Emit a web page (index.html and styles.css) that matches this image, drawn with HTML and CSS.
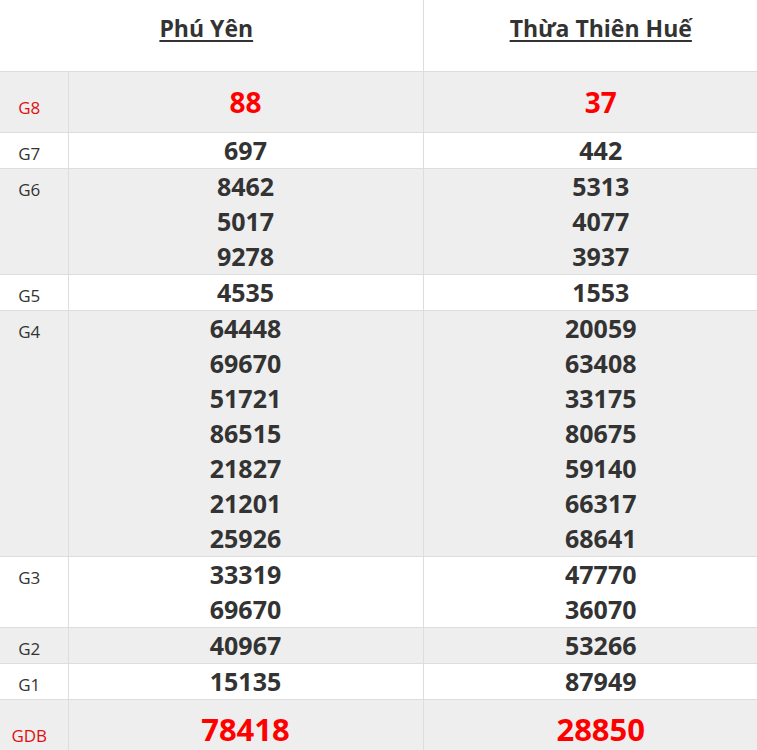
FILE: index.html
```html
<!DOCTYPE html>
<html lang="vi">
<head>
<meta charset="utf-8">
<title>Kết quả xổ số</title>
<link rel="stylesheet" href="styles.css">
</head>
<body>
<table class="kq">
  <colgroup>
    <col class="c-label">
    <col class="c-prov">
    <col class="c-prov">
  </colgroup>
  <thead>
    <tr class="head">
      <th colspan="2" class="prov prov-first"><a href="#">Phú Yên</a></th>
      <th class="prov prov-second"><a href="#">Thừa Thiên Huế</a></th>
    </tr>
  </thead>
  <tbody>
    <tr class="row g8 shade">
      <td class="lbl red">G8</td>
      <td class="num big red">88</td>
      <td class="num big red">37</td>
    </tr>
    <tr class="row">
      <td class="lbl">G7</td>
      <td class="num">697</td>
      <td class="num">442</td>
    </tr>
    <tr class="row shade">
      <td class="lbl">G6</td>
      <td class="num"><div>8462</div><div>5017</div><div>9278</div></td>
      <td class="num"><div>5313</div><div>4077</div><div>3937</div></td>
    </tr>
    <tr class="row">
      <td class="lbl">G5</td>
      <td class="num">4535</td>
      <td class="num">1553</td>
    </tr>
    <tr class="row shade">
      <td class="lbl">G4</td>
      <td class="num"><div>64448</div><div>69670</div><div>51721</div><div>86515</div><div>21827</div><div>21201</div><div>25926</div></td>
      <td class="num"><div>20059</div><div>63408</div><div>33175</div><div>80675</div><div>59140</div><div>66317</div><div>68641</div></td>
    </tr>
    <tr class="row">
      <td class="lbl">G3</td>
      <td class="num"><div>33319</div><div>69670</div></td>
      <td class="num"><div>47770</div><div>36070</div></td>
    </tr>
    <tr class="row shade">
      <td class="lbl">G2</td>
      <td class="num">40967</td>
      <td class="num">53266</td>
    </tr>
    <tr class="row">
      <td class="lbl">G1</td>
      <td class="num">15135</td>
      <td class="num">87949</td>
    </tr>
    <tr class="row gdb shade">
      <td class="lbl red">GDB</td>
      <td class="num huge red">78418</td>
      <td class="num huge red">28850</td>
    </tr>
  </tbody>
</table>
</body>
</html>
```

FILE: styles.css
```css
html, body {
  margin: 0;
  padding: 0;
  overflow: hidden;
  background: #fff;
}

body {
  font-family: "Open Sans", "Noto Sans", sans-serif;
  color: #333;
}

.kq {
  width: 777px;
  border-collapse: collapse;
  table-layout: fixed;
}

.c-label { width: 68px; }
.c-prov { width: 355px; }

.head th {
  height: 71px;
  padding: 12px 0 0;
  vertical-align: top;
  box-sizing: border-box;
  font-weight: 700;
  font-size: 23px;
  line-height: 33px;
  text-align: center;
}

.head a {
  color: #333;
  text-decoration: underline;
  text-decoration-thickness: 2px;
  text-underline-offset: 3px;
}

.prov-first { padding-right: 10px !important; }
.prov-second { border-left: 1px solid #ddd; }

.row td {
  border-top: 1px solid #ddd;
  vertical-align: top;
  padding: 0;
}

.row td + td {
  border-left: 1px solid #ddd;
}

.shade td { background: #eee; }

.lbl {
  font-size: 17px;
  line-height: 20px;
  color: #333;
  text-align: center;
}

.row .lbl {
  padding: 11px 9px 0 0;
}

.lbl.red { color: #e01010; }

.num {
  text-align: center;
  font-weight: 700;
  font-size: 25px;
  line-height: 35px;
  color: #333;
}

.num.red { color: #f00; }

.row.g8 .num {
  padding-top: 13px;
  padding-bottom: 12px;
}

.row.g8 .lbl {
  padding-top: 26px;
}

.big {
  font-size: 28px;
}

.row.gdb .num {
  padding-top: 12px;
  padding-bottom: 12px;
}

.row.gdb .lbl {
  padding-top: 26px;
}

.huge {
  font-size: 31px;
}
```
